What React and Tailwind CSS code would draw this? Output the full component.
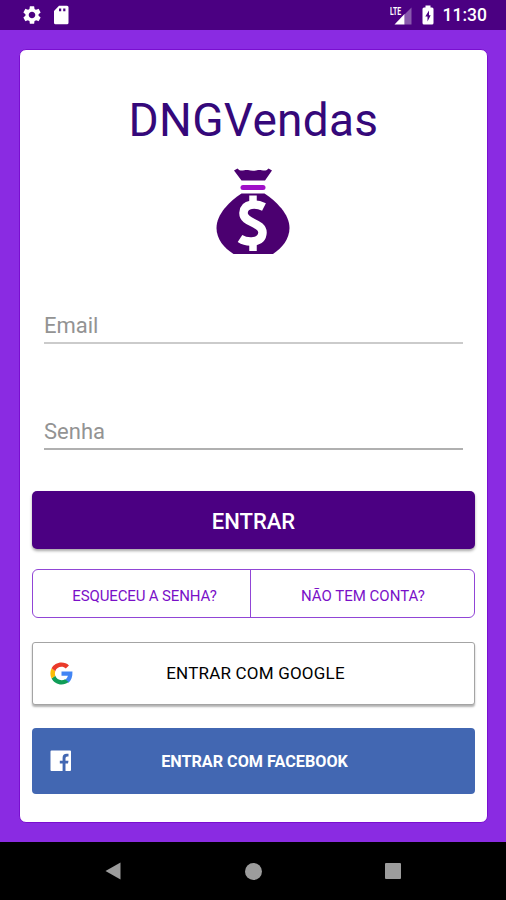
import { MdSettings } from 'react-icons/md'

function StatusBar() {
  return (
    <header className="flex h-[30px] items-center justify-between bg-[#4b0082] pr-[19px] pl-[21px] text-white">
      <div className="flex items-center gap-[10px]">
        <MdSettings className="size-[22px]" />
        <svg viewBox="0 0 16 20" className="h-5 w-4" fill="currentColor">
          <path
            fillRule="evenodd"
            d="M6 0.800h8q1.500 0 1.500 1.500v15.500q0 1.500-1.500 1.500H2.500Q1 19.300 1 17.800V6zM6 3.500v2.800h2.200V3.500zM10.200 3.500v2.800H12.400V3.500z"
          />
        </svg>
      </div>
      <div className="flex items-center">
        <svg viewBox="0 0 24 20" className="h-5 w-6" fill="currentColor">
          <path d="M21.500 2.500v17H14.500V9.500z" opacity="0.35" />
          <path d="M14.500 9v10.500H4.500z" />
          <text
            x="0"
            y="9.500"
            fontSize="11"
            fontWeight="700"
            fontFamily="Roboto, sans-serif"
            textLength="11"
            lengthAdjust="spacingAndGlyphs"
          >
            LTE
          </text>
        </svg>
        <svg viewBox="0 0 14 20" className="ml-[7px] h-5 w-[14px]" fill="currentColor">
          <path
            fillRule="evenodd"
            d="M4.500 0.500h5v2h1.500q1.500 0 1.500 1.500v14q0 1.500-1.500 1.500H3q-1.500 0-1.500-1.500V4q0-1.500 1.500-1.500h1.500zM8 5.500L4.300 11.500H6.500V16.500L9.700 10.300H8z"
          />
        </svg>
        <span className="ml-[8px] text-[17.500px] leading-5 font-medium">11:30</span>
      </div>
    </header>
  )
}

function MoneyBag() {
  return (
    <svg viewBox="0 0 74 86" className="h-[86px] w-[74px]">
      <path
        d="M21.500 0.500C25 4.500 28 1.500 32 2Q37 3.500 42 2C46 1.500 49 4.500 52.500 0.500L56 2.500L49 12.500H25.500L18 2.500z"
        fill="#4b0070"
      />
      <rect x="24.500" y="17" width="25" height="5" rx="2.500" fill="#a010c8" />
      <path
        d="M25.500 25.500H48.500C60 33 73.500 46 73.500 60C73.500 71 66 80 57 86H17.500C8 80 0.500 71 0.500 60C0.500 46 14 33 25.500 25.500z"
        fill="#4b0070"
      />
      <g fill="none" stroke="#fff">
        <path
          d="M48 39C41 35.500 28 34.500 27.500 45C27.300 55.500 46.500 54 46.500 64.500C46 75.500 31 75 24 70.500"
          strokeWidth="8.500"
        />
        <path d="M37 27.500V36M37 73V83" strokeWidth="7.500" />
      </g>
    </svg>
  )
}

function Field({ label, type, className }) {
  return (
    <input
      type={type}
      placeholder={label}
      className={`mx-6 block h-[38px] border-b-2 bg-transparent pt-[3px] text-[22px] outline-none placeholder:text-[#939393] ${className}`}
    />
  )
}

function NavigationBar() {
  return (
    <nav className="flex h-[58px] items-center justify-between bg-black pr-[105px] pl-[105px] text-[#9c9c9c]">
      <svg viewBox="0 0 16 18" className="h-[18px] w-4" fill="currentColor">
        <path d="M15.500 0.500v17L0.500 9z" />
      </svg>
      <div className="size-[17px] rounded-full bg-[#9c9c9c]" />
      <div className="size-4 rounded-[1px] bg-[#9c9c9c]" />
    </nav>
  )
}

function App() {
  return (
    <div className="flex h-[900px] w-[506px] flex-col bg-[#8a2be2] font-['Roboto',sans-serif]">
      <StatusBar />
      <main className="mt-[19px] mr-[18px] mb-[19px] ml-[19px] flex grow flex-col rounded-[7px] border border-[#7a0fd0] bg-white">
        <h1 className="mt-[42px] text-center text-[46px] leading-[56px] tracking-[0.300px] text-[#35087a]">
          DNGVendas
        </h1>
        <div className="mt-5 flex justify-center pr-px">
          <MoneyBag />
        </div>
        <Field label="Email" type="email" className="mt-[52px] border-[#cbcbcb]" />
        <Field label="Senha" type="password" className="mt-[68px] border-[#b0b0b0]" />

        <div className="mr-3 ml-3 mt-[41px] flex flex-col">
          <button className="h-[58px] rounded-[5px] bg-[#4b0082] pt-[3px] text-[22px] font-medium text-white shadow-[0_2px_3px_rgba(0,0,0,0.35)]">
            ENTRAR
          </button>
          <div className="mt-[20px] flex h-[49px] rounded-[6px] border border-[#9145d6] text-[15px] text-[#7a10c8]">
            <button className="w-[218px] border-r border-[#9145d6] pt-[5px] pl-[6px] tracking-[-0.130px]">
              ESQUECEU A SENHA?
            </button>
            <button className="grow pt-[5px] pl-px">NÃO TEM CONTA?</button>
          </div>
          <button className="mt-6 flex h-[63px] items-center rounded-[3px] border border-[#a4a4a4] bg-white pl-[16px] text-[17px] shadow-[0_2px_2px_rgba(0,0,0,0.3)]">
            <svg viewBox="0 0 48 48" className="size-[25px]">
              <path
                fill="#4285f4"
                d="M45 20H24v8.400h12.200c-.7 3.400-2.600 6-5.400 7.900l6.700 5.300C42.600 37.200 45.500 30.500 45 20z"
              />
              <path
                fill="#109d58"
                d="M5 33.500C8.500 40.500 15.800 45 24 45c5.300 0 10-1.500 13.700-4.700l-6.800-5.500c-2 1.300-4.300 2-6.900 2-5.500 0-10.200-3.500-12-8.500z"
              />
              <path fill="#fbbc05" d="M12 28.500c-.9-2.900-.9-6.100 0-9L5 14c-3.200 6.100-3.200 13.400 0 19.500z" />
              <path
                fill="#ea3a2a"
                d="M24 11.200c3.200 0 6 1.100 8.200 3.200l6.100-6C34.500 5 29.600 3 24 3 15.800 3 8.500 7.300 5 14l7 5.500c1.800-4.900 6.500-8.300 12-8.300z"
              />
            </svg>
            <span className="grow pt-px pr-[37px] text-center tracking-[0.200px]">ENTRAR COM GOOGLE</span>
          </button>
          <button className="mt-[23px] flex h-[66px] items-center rounded-[4px] bg-[#4267b2] pl-[18px] text-[16.200px] font-bold text-white">
            <svg viewBox="0 0 22 22" className="size-[22px]" fill="currentColor">
              <path d="M1.500 0.500h18.500q1 0 1 1v18.500q0 1-1 1H15.500v-7.500h2.500l0.500-2.800H15.500V8.200q0-1.700 1.800-1.700H18.500V3.700H16.700Q12.600 3.700 12.600 7.800V10.700H9.800v2.800h2.800V21H1.500q-1 0-1-1V1.500q0-1 1-1z" />
            </svg>
            <span className="grow pt-[3px] pr-[38px] text-center">ENTRAR COM FACEBOOK</span>
          </button>
        </div>
      </main>
      <NavigationBar />
    </div>
  )
}

export default App
